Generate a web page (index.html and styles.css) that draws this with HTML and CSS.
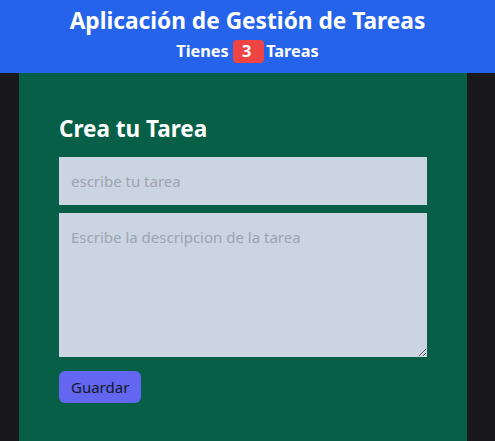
FILE: index.html
```html
<!DOCTYPE html>
<html lang="es">
<head>
<meta charset="utf-8">
<title>Tareas</title>
<link rel="stylesheet" href="styles.css">
</head>
<body>
<header class="header">
  <h1 class="header-title">Aplicación de Gestión de Tareas</h1>
  <p class="header-sub">Tienes <span class="badge">3</span>Tareas</p>
</header>
<main class="main">
  <form class="card">
    <h2 class="card-title">Crea tu Tarea</h2>
    <input class="field" type="text" placeholder="escribe tu tarea">
    <textarea class="field area" placeholder="Escribe la descripcion de la tarea"></textarea>
    <button class="btn" type="button">Guardar</button>
  </form>
</main>
</body>
</html>
```
FILE: styles.css
```css
* { box-sizing: border-box; }
html, body { margin: 0; padding: 0; }
body {
  background: #18181b;
  font-family: "Noto Sans", "Open Sans", sans-serif;
  height: 100vh;
  display: flex;
  flex-direction: column;
  overflow: hidden;
}
.header {
  background: #2563eb;
  color: #fff;
  text-align: center;
  padding: 5px 0 8px;
  flex: none;
}
.header-title {
  margin: 0;
  font-size: 22.7px;
  line-height: 32px;
  font-weight: 700;
}
.header-sub {
  margin: 0;
  font-size: 16.3px;
  line-height: 28px;
  font-weight: 700;
}
.badge {
  display: inline-block;
  background: #ef4444;
  border-radius: 4px;
  padding: 0 13px 0 9px;
  line-height: 23px;
  margin: 0 2px 0 0;
}
.main {
  width: 448px;
  margin: 0 19px;
  background: #065f46;
  padding: 40px 40px 30px;
  flex: 1;
}
.card { display: flex; flex-direction: column; align-items: flex-start; }
.card-title {
  margin: 0 0 12px;
  color: #fff;
  font-size: 22.5px;
  line-height: 32px;
  font-weight: 700;
}
.field {
  width: 368px;
  background: #cbd5e1;
  border: none;
  padding: 12px;
  font: inherit;
  font-size: 15px;
  line-height: 24px;
  color: #111;
  margin: 0 0 8px;
  outline: none;
}
.field::placeholder { color: #9ca3af; }
.area { height: 144px; resize: vertical; margin-bottom: 14px; }
.btn {
  background: #6366f1;
  color: #111827;
  border: none;
  border-radius: 6px;
  padding: 4px 12px;
  font: inherit;
  font-size: 15px;
  line-height: 24px;
}
```
